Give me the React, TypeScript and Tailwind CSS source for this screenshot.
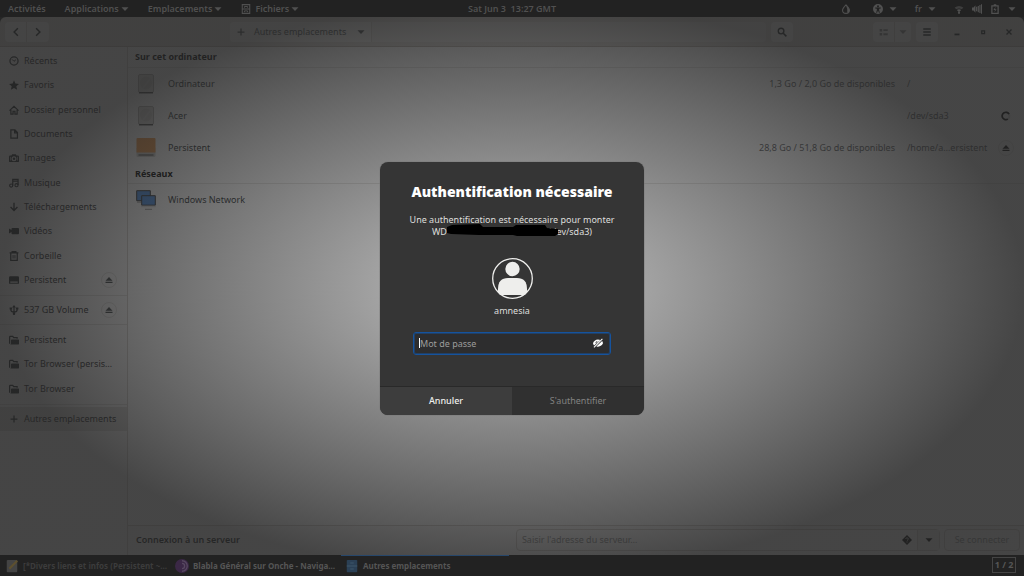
import type { ReactNode } from 'react';

const icons: Record<string, ReactNode> = {
    recent: (
        <>
            <circle cx="8" cy="8" r="6.5" fill="none" stroke="currentColor" strokeWidth="2" />
            <path d="M5 5.5 8 8.5 11 6" fill="none" stroke="currentColor" strokeWidth="1.6" />
        </>
    ),
    star: <path d="M8 .5 10.2 5.6 16 6.2 11.7 10 13 15.5 8 12.6 3 15.5 4.3 10 0 6.2 5.8 5.6Z" />,
    home: <path d="M.8 9 8 2.2 15.2 9M3 8v6.5h3.500V10h3v4.500H13V8" fill="none" stroke="currentColor" strokeWidth="1.9" />,
    document: <path d="M3 1.500h6.500L13.500 5.500v9H3ZM9 1.500V6h4.500" fill="none" stroke="currentColor" strokeWidth="2" />,
    camera: (
        <path fillRule="evenodd" d="M5 2h6l1 2h2q2 0 2 2v7q0 1.500-1.500 1.500h-13Q0 14.500 0 13V6q0-2 2-2h2ZM8 5a4 4 0 1 0 0 8 4 4 0 0 0 0-8Zm0 2a2 2 0 1 1 0 4 2 2 0 0 1 0-4ZM2 6v6h1V6Zm11 0v6h1V6Z" />
    ),
    music: (
        <>
            <path d="M6 12V2h8.500v9M6 5h8" fill="none" stroke="currentColor" strokeWidth="2" />
            <circle cx="3.500" cy="12" r="2.500" fill="none" stroke="currentColor" strokeWidth="1.8" />
            <circle cx="12" cy="11.500" r="2.500" fill="none" stroke="currentColor" strokeWidth="1.8" />
        </>
    ),
    download: <path d="M8 1v12M2.500 8 8 13.500 13.500 8" fill="none" stroke="currentColor" strokeWidth="2.2" />,
    video: <path d="M5.500 3h9Q16 3 16 4.500v7q0 1.500-1.500 1.500h-9Q4 13 4 11.500V9.500L0 12V4l4 2.500V4.500Q4 3 5.500 3Z" />,
    trash: (
        <>
            <path d="M1 3h14M5 2.500V1h6v1.500M2.800 3v12h10.400V3" fill="none" stroke="currentColor" strokeWidth="2" />
            <path d="M6.500 6.500v5.500M9.500 6.500v5.500" stroke="currentColor" strokeWidth="1.5" />
        </>
    ),
    drive: <path fillRule="evenodd" d="M2 2h12q2 0 2 2v9q0 1-1 1H1q-1 0-1-1V4q0-2 2-2ZM2 10.500v1.800h12v-1.800Z" />,
    usb: (
        <>
            <path d="M8 2v13M3 5.500V8q0 3 5 3.500M13 5.500V8q0 3-5 3.500" fill="none" stroke="currentColor" strokeWidth="2" />
            <path d="M8 0 11 4H5ZM1 4h4v3H1ZM11 4h4v3h-4Z" />
            <circle cx="8" cy="14" r="2" />
        </>
    ),
    folder: (
        <>
            <path d="M1 14V3q0-1 1-1h4l1.500 2H13v2" fill="none" stroke="currentColor" strokeWidth="2" />
            <path d="M4.500 7H15q1 0 1 1v6q0 1-1 1H1.500q1.500 0 1.700-1.500V8.500Q3.200 7 4.500 7Z" />
        </>
    ),
    plus: <path d="M8 2.500v11M2.500 8h11" stroke="currentColor" strokeWidth="2" />,
    eject: <path d="M8 2 15 9.500H1ZM1 11.500h14V14H1Z" />,
    left: <path d="M11 2 5 8l6 6" fill="none" stroke="currentColor" strokeWidth="2.4" />,
    right: <path d="M5 2l6 6-6 6" fill="none" stroke="currentColor" strokeWidth="2.4" />,
    search: (
        <>
            <circle cx="6.500" cy="6.500" r="4.500" fill="none" stroke="currentColor" strokeWidth="2.2" />
            <path d="M10 10l5 5" stroke="currentColor" strokeWidth="2.6" />
        </>
    ),
    list: <path d="M1 3h4v4H1ZM1 9.500h4v4H1ZM7 3.500h7v3H7ZM7 10h7v3H7Z" />,
    menu: <path d="M2 2h12v2.400H2ZM2 6.800h12v2.400H2ZM2 11.600h12V14H2Z" />,
    minimize: <path d="M4 10.500h8v2.800H4Z" />,
    maximize: <path d="M6 6h4.500v4.500H6Z" fill="none" stroke="currentColor" strokeWidth="2" />,
    close: <path d="M4 4l8 8M12 4l-8 8" stroke="currentColor" strokeWidth="2.2" />,
    caret: <path d="M1 4.500h14L8 12Z" />,
    cabinet: (
        <>
            <path d="M2 1h12v14H2ZM2 8h12" fill="none" stroke="currentColor" strokeWidth="1.7" />
            <path d="M5.500 6V4h5v2M5.500 13v-2h5v2" fill="none" stroke="currentColor" strokeWidth="1.5" />
        </>
    ),
    drop: (
        <>
            <path d="M8 1.500Q2.500 7 2.500 10a5.500 5 0 0 0 11 0Q13.500 7 8 1.500Z" fill="none" stroke="currentColor" strokeWidth="1.7" />
            <path d="M8 2Q11 8 10 14.500 14 13 13.500 9.500 12.500 6 8 2Z" />
        </>
    ),
    access: (
        <path fillRule="evenodd" d="M8 0a8 8 0 1 0 0 16A8 8 0 0 0 8 0Zm0 2a1.600 1.600 0 1 1 0 3.200A1.600 1.600 0 0 1 8 2ZM3.500 5.500h9V7L9.800 7.500v2L11 14H9.500L8 10.500 6.500 14H5l1.200-4.500v-2L3.500 7Z" />
    ),
    wifi: (
        <>
            <path d="M1 5.500q7-5 14 0L12.500 8.500q-4.500-3-9 0Z" opacity=".6" />
            <path d="M4.500 9.500q3.500-2.500 7 0L8 13Z" />
            <circle cx="8" cy="14" r="1.8" />
        </>
    ),
    volume: <path d="M0 5.500h2.500L5.500 2v12L2.500 10.500H0ZM6.500 4.500h1.800v7H6.500ZM9.200 3H11v10H9.200ZM11.800 1.500h1.800v13h-1.800ZM14.400.5H16v15h-1.600Z" />,
    battery: (
        <>
            <path d="M3 3h10v12H3ZM6 1.500h4" fill="none" stroke="currentColor" strokeWidth="2" />
            <path d="M9 4.500 5.500 9.500H8L7 13l3.500-4.500H8Z" />
        </>
    ),
    help: (
        <>
            <path d="M8 0l8 8-8 8-8-8Z" />
            <path d="M5.800 6.300Q6 4.500 8 4.500t2.200 1.700Q10.200 7.500 8 9M8 10.300v1.700" fill="none" stroke="#bbb" strokeWidth="1.6" />
        </>
    ),
    spinner: (
        <>
            <circle cx="8" cy="8" r="5.500" fill="none" stroke="currentColor" strokeWidth="3" opacity=".15" />
            <path d="M11 13A6 6 0 1 1 13 5" fill="none" stroke="currentColor" strokeWidth="2.6" />
        </>
    ),
    hidden: (
        <>
            <path fillRule="evenodd" d="M8 2.500C4 2.500 1 5.500 0 8.500q.5 2 1.600 3.300L11.800 3Q10 2.500 8 2.500ZM14.600 4.600 5.500 13.500q1.200.4 2.500.4c4 0 7-2.600 8-5.400q-.4-2.300-1.400-3.900ZM4 7Q4.800 4.600 7.500 4.600L4.500 8.800Z" />
            <path d="M1.500 15 15 1.500" stroke="currentColor" strokeWidth="1.7" />
        </>
    )
};

const Icon = ({ name, className = 'size-2.5' }: { name: string, className?: string }) => (
    <svg viewBox="0 0 16 16" fill="currentColor" className={`shrink-0 ${className}`} aria-hidden="true">
        {icons[name]}
    </svg>
);

const PanelMenu = ({ label, icon }: { label: string, icon?: string }) => (
    <button className="flex items-center gap-0.5">
        {icon && <Icon name={icon} className="mr-0.5 size-2.5" />}
        {label}
        <Icon name="caret" className="size-2" />
    </button>
);

const TopPanel = () => (
    <header className="relative z-10 grid h-[17px] grid-cols-[1fr_auto_1fr] items-center bg-[#222] px-2 font-semibold text-[#505050]">
        <nav className="flex items-center gap-[19px]">
            <button>Activités</button>
            <PanelMenu label="Applications" />
            <PanelMenu label="Emplacements" />
            <PanelMenu label="Fichiers" icon="cabinet" />
        </nav>
        <time className="whitespace-pre">Sat Jun 3  13:27 GMT</time>
        <div className="flex items-center justify-end">
            <Icon name="drop" />
            <button className="ml-[22px] flex items-center gap-1.5" aria-label="Accessibilité">
                <Icon name="access" />
                <Icon name="caret" className="size-2" />
            </button>
            <button className="ml-[18px] flex items-center gap-1.5">
                fr
                <Icon name="caret" className="size-2" />
            </button>
            <button className="ml-[18px] flex items-center gap-2" aria-label="Système">
                <Icon name="wifi" />
                <Icon name="volume" />
                <Icon name="battery" />
                <Icon name="caret" className="size-2" />
            </button>
        </div>
    </header>
);

const HeaderBar = () => (
    <div className="flex h-[30px] shrink-0 items-center rounded-t-md border-b border-[#bfb8b1] bg-[#dedad6] px-[5px]">
        <div className="flex w-[225px] shrink-0">
            <button className="flex h-5 w-[22px] items-center justify-center rounded-l-sm border-r border-[#d5d0cc] bg-[#f6f5f4]" aria-label="Précédent">
                <Icon name="left" />
            </button>
            <button className="flex h-5 w-[22px] items-center justify-center rounded-r-sm bg-[#f6f5f4]" aria-label="Suivant">
                <Icon name="right" />
            </button>
        </div>
        <div className="flex h-5 flex-1 rounded-sm bg-[#eae8e6]">
            <button className="flex w-[142px] items-center rounded-l-sm border-r border-[#d5d0cc] bg-[#f0efed] px-1.5 text-[#4a4f51]">
                <Icon name="plus" />
                <span className="ml-2 flex-1 text-left">Autres emplacements</span>
                <Icon name="caret" className="size-2" />
            </button>
        </div>
        <button className="ml-[5px] flex h-5 w-[22px] items-center justify-center rounded-sm bg-[#f6f5f4]" aria-label="Rechercher">
            <Icon name="search" />
        </button>
        <div className="ml-20 flex text-[#888]">
            <button className="flex h-5 w-[22px] items-center justify-center rounded-l-sm border-r border-[#d5d0cc] bg-[#f6f5f4]" aria-label="Vue en liste">
                <Icon name="list" />
            </button>
            <button className="flex h-5 w-4 items-center justify-center rounded-r-sm bg-[#f6f5f4]" aria-label="Options de vue">
                <Icon name="caret" className="size-2" />
            </button>
        </div>
        <button className="ml-[5px] flex h-5 w-[22px] items-center justify-center rounded-sm bg-[#f6f5f4]" aria-label="Menu">
            <Icon name="menu" />
        </button>
        <div className="ml-3.5 flex gap-4 pr-[5px]">
            <button aria-label="Réduire"><Icon name="minimize" /></button>
            <button aria-label="Agrandir"><Icon name="maximize" /></button>
            <button aria-label="Fermer"><Icon name="close" /></button>
        </div>
    </div>
);

type Place = { icon: string, label: string, ejectable?: boolean };

const places: Place[] = [
    { icon: 'recent', label: 'Récents' },
    { icon: 'star', label: 'Favoris' },
    { icon: 'home', label: 'Dossier personnel' },
    { icon: 'document', label: 'Documents' },
    { icon: 'camera', label: 'Images' },
    { icon: 'music', label: 'Musique' },
    { icon: 'download', label: 'Téléchargements' },
    { icon: 'video', label: 'Vidéos' },
    { icon: 'trash', label: 'Corbeille' },
    { icon: 'drive', label: 'Persistent', ejectable: true }
];

const bookmarks: Place[] = [
    { icon: 'folder', label: 'Persistent' },
    { icon: 'folder', label: 'Tor Browser (persis…' },
    { icon: 'folder', label: 'Tor Browser' }
];

const PlaceRow = ({ icon, label, ejectable }: Place) => (
    <li className="flex min-w-0 items-center pr-2.5 pl-[9px]">
        <Icon name={icon} />
        <a href="#" className="ml-[5px] min-w-0 flex-1 whitespace-nowrap">{label}</a>
        {ejectable && (
            <button className="flex size-4 items-center justify-center rounded-full border border-[#e0dedc] text-[#3c4244]" aria-label={`Éjecter ${label}`}>
                <Icon name="eject" className="size-2" />
            </button>
        )}
    </li>
);

const Sidebar = () => (
    <aside className="w-32 shrink-0 border-r border-[#d5d0cc] bg-[#fbfafa] pt-0.5">
        <ul className="grid h-[243px] auto-rows-fr">
            {places.map(place => <PlaceRow key={place.label} {...place} />)}
        </ul>
        <ul className="my-[3px] grid h-[30px] border-y border-[#e0dedc]">
            <PlaceRow icon="usb" label="537 GB Volume" ejectable />
        </ul>
        <ul className="grid h-[73px] auto-rows-fr">
            {bookmarks.map(place => <PlaceRow key={place.label} {...place} />)}
        </ul>
        <ul className="mt-[3px] border-t border-[#e0dedc] pt-0.5">
            <li className="flex h-6 items-center bg-[#dddbd9] pl-[9px]">
                <Icon name="plus" />
                <a href="#" className="ml-[5px] whitespace-nowrap">Autres emplacements</a>
            </li>
        </ul>
    </aside>
);

const DiskIcon = () => (
    <svg viewBox="0 0 20 20" className="size-5" aria-hidden="true">
        <rect x="2.500" y=".5" width="15" height="18" rx="1.500" fill="#deddda" stroke="#b5b3b0" />
        <path d="M3 18.800h14" stroke="#333" strokeWidth="1.2" />
        <ellipse cx="10" cy="9" rx="6" ry="6.500" fill="#cfcdca" />
        <path d="M7 14 14 5" stroke="#dad9d7" strokeWidth="1.5" />
    </svg>
);

const RemovableIcon = () => (
    <svg viewBox="0 0 20 20" className="size-5" aria-hidden="true">
        <path d="M.5 10h19v7.500q0 1.500-1.500 1.500H2Q.5 19 .5 17.500Z" fill="#d5d3cf" />
        <path d="M1.500 0h17Q19.500 0 19.500 1v13.500H.5V1Q.5 0 1.500 0Z" fill="#f0994a" />
        <path d="M2.500 17h15" stroke="#444" />
    </svg>
);

const NetworkIcon = () => (
    <svg viewBox="0 0 20 20" className="size-5" aria-hidden="true">
        <path d="M.7.700h13.600v10H.7Z" fill="#4a90e8" stroke="#333" />
        <path d="M1 12h4M9 19.500h7" stroke="#aaa" strokeWidth="1.5" />
        <path d="M5.700 5.700h13.600v9.500H5.700Z" fill="#4a90e8" stroke="#333" />
        <path d="M5.200 16.500h14.600" stroke="#ddd" strokeWidth="1.5" />
    </svg>
);

const VolumeRow = ({ icon, name, space, path, action }: {
    icon: ReactNode;
    name: string;
    space?: string;
    path?: string;
    action?: ReactNode;
}) => (
    <li className="flex h-8 items-center pr-2.5 pl-2 text-[#5c6062]">
        {icon}
        <span className="ml-3 flex-1 text-[#2e3436]">{name}</span>
        <span>{space}</span>
        <span className="ml-3 w-[91px] whitespace-nowrap">{path}</span>
        <span className="flex w-4 justify-center text-black">{action}</span>
    </li>
);

const Volumes = () => (
    <main className="flex min-w-0 flex-1 flex-col bg-white">
        <h2 className="flex h-[21px] items-center border-b border-[#e6e5e3] px-[7px] font-bold text-black">Sur cet ordinateur</h2>
        <ul>
            <VolumeRow icon={<DiskIcon />} name="Ordinateur" space="1,3 Go / 2,0 Go de disponibles" path="/" />
            <VolumeRow icon={<DiskIcon />} name="Acer" path="/dev/sda3" action={<Icon name="spinner" />} />
            <VolumeRow
                icon={<RemovableIcon />}
                name="Persistent"
                space="28,8 Go / 51,8 Go de disponibles"
                path="/home/a…ersistent"
                action={
                    <button className="flex size-4 items-center justify-center rounded-full border border-[#e6e5e3]" aria-label="Éjecter Persistent">
                        <Icon name="eject" className="size-2" />
                    </button>
                }
            />
        </ul>
        <h2 className="flex h-5 items-center border-b border-[#e6e5e3] px-[7px] font-bold text-black">Réseaux</h2>
        <ul className="flex-1">
            <VolumeRow icon={<NetworkIcon />} name="Windows Network" />
        </ul>
        <form className="flex h-[30px] items-center border-t border-[#d5d0cc] bg-[#fbfafa] pr-1 pb-0.5 pl-2">
            <label htmlFor="server" className="flex-9 font-semibold">Connexion à un serveur</label>
            <div className="flex h-[22px] flex-10 rounded-sm border border-[#d5d0cc]">
                <input id="server" className="min-w-0 flex-1 px-[5px] placeholder:text-[#888]" placeholder="Saisir l'adresse du serveur…" />
                <button type="button" className="px-[5px] text-black" aria-label="Aide"><Icon name="help" /></button>
                <button type="button" className="flex w-[22px] items-center justify-center border-l border-[#d5d0cc] bg-[#f0efed] text-black" aria-label="Serveurs récents">
                    <Icon name="caret" className="size-2" />
                </button>
            </div>
            <button type="button" className="ml-1 h-[22px] w-[76px] rounded-sm border border-[#d5d0cc] text-[#929595]">Se connecter</button>
        </form>
    </main>
);

const NotesIcon = () => (
    <svg viewBox="0 0 16 16" className="size-3.5 shrink-0" aria-hidden="true">
        <rect x="2" y="1" width="12" height="14" rx="1" fill="#444" />
        <path d="M5 11 14 2" stroke="#5d5030" strokeWidth="2.5" />
    </svg>
);

const OnionIcon = () => (
    <svg viewBox="0 0 16 16" className="size-3.5 shrink-0" aria-hidden="true">
        <circle cx="8" cy="8" r="8" fill="#3b2846" />
        <path d="M8 2a6 6 0 0 1 0 12M8 5a3 3 0 0 1 0 6" fill="none" stroke="#574860" strokeWidth="1.5" />
    </svg>
);

const FilesIcon = () => (
    <svg viewBox="0 0 16 16" className="size-3.5 shrink-0" aria-hidden="true">
        <rect x="2" y="1" width="12" height="14" rx="1" fill="#2b4055" />
        <path d="M2 8h12M6 4.500h4M6 11.500h4" stroke="#3f566b" strokeWidth="1.2" />
    </svg>
);

const Taskbar = () => (
    <footer className="relative z-10 flex h-[21px] items-stretch gap-0.5 bg-[#222] pr-2 pl-px text-[8px] font-bold whitespace-nowrap text-[#555]">
        <button className="flex w-[168px] items-center gap-1 pl-1 text-[#3c3c3c]">
            <NotesIcon />
            [*Divers liens et infos (Persistent ~…
        </button>
        <button className="flex w-[168px] items-center gap-1 pl-1">
            <OnionIcon />
            Blabla Général sur Onche - Naviga…
        </button>
        <button className="flex w-[168px] items-center gap-1 border-t border-[#27476b] pl-1">
            <FilesIcon />
            Autres emplacements
        </button>
        <button className="mt-0.5 mb-[3px] ml-auto w-6 border border-[#444] text-[9px]">1 / 2</button>
    </footer>
);

const AuthDialog = () => (
    <form role="dialog" aria-labelledby="auth-title" className="flex w-[264px] flex-col overflow-hidden rounded-lg bg-[#353535] text-center text-[#dededc] ring-1 ring-[#777]/40">
        <div className="flex flex-col items-center px-[33px] pt-5 pb-[31px]">
            <h1 id="auth-title" className="text-[14px] leading-5 font-black whitespace-nowrap text-white">Authentification nécessaire</h1>
            <p className="mt-3 leading-3 whitespace-nowrap">
                Une authentification est nécessaire pour monter
                <br />
                WD
                <span className="relative inline-block h-2 w-[98px]">
                    <svg viewBox="0 0 112 14" className="absolute -top-1 left-0 h-3.5 w-28 max-w-none" aria-hidden="true">
                        <path d="M0 4 5 2 33 1 36 4 66 4 69 2 98 2 100 5 111 6V11L108 13 70 13 66 12 32 12 4 11 0 10Z" />
                    </svg>
                </span>
                (/dev/sda3)
            </p>
            <svg viewBox="0 0 41 41" className="mt-5 size-[41px]" aria-hidden="true">
                <circle cx="20.500" cy="20.500" r="19.800" fill="none" stroke="#eeeeec" strokeWidth="1.3" />
                <circle cx="20.500" cy="11" r="7.200" fill="#eeeeec" />
                <path d="M6 34V31q0-11 10-11h9q10 0 10 11v3l-2 3H8Z" fill="#eeeeec" />
            </svg>
            <span className="mt-[5px] leading-[14px]">amnesia</span>
            <div className="relative mt-3.5 flex h-[23px] w-full items-center rounded-[3px] border border-[#15539e] bg-[#2d2d2e] outline outline-[#15539e]/50 -outline-offset-2">
                <input type="password" aria-label="Mot de passe" placeholder="Mot de passe" className="h-full min-w-0 flex-1 px-1.5 outline-none placeholder:text-[#9c9c9b]" />
                <span className="absolute left-[5px] h-2.5 w-px bg-white" />
                <button type="button" className="pr-[7px] text-white" aria-label="Afficher le mot de passe">
                    <Icon name="hidden" />
                </button>
            </div>
        </div>
        <div className="grid h-[29px] grid-cols-2 border-t border-[#292929]">
            <button type="button" className="bg-[#3d3d3d] font-medium text-[#eeeeec]">Annuler</button>
            <button type="submit" className="bg-[#303030] text-[#828281]">S'authentifier</button>
        </div>
    </form>
);

const App = () => (
    <div className="relative flex h-screen flex-col overflow-hidden bg-[#222] font-['Noto_Sans',sans-serif] text-[9px] leading-3 text-[#1e2426]">
        <TopPanel />
        <div className="flex min-h-0 flex-1 flex-col">
            <HeaderBar />
            <div className="flex min-h-0 flex-1">
                <Sidebar />
                <Volumes />
            </div>
        </div>
        <Taskbar />
        <div className="absolute inset-0 flex items-center justify-center bg-[radial-gradient(closest-side,rgba(39,39,39,0.28),rgba(39,39,39,0.86))]">
            <AuthDialog />
        </div>
    </div>
);

export default App;
